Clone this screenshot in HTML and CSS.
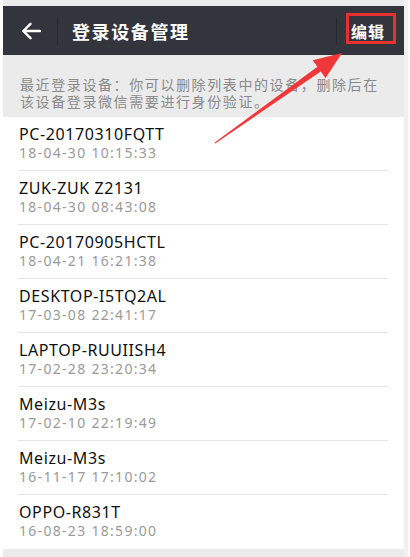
FILE: index.html
```html
<!DOCTYPE html>
<html lang="zh-CN">
<head>
<meta charset="utf-8">
<title>登录设备管理</title>
<link rel="stylesheet" href="styles.css">
</head>
<body>
<div class="screen">
  <header class="header">
    <div class="back">
      <svg width="20" height="18" viewBox="0 0 20 18"><path d="M19 9H2.5M9.5 1.8L2.3 9l7.2 7.2" fill="none" stroke="#fff" stroke-width="2.4" stroke-linecap="round" stroke-linejoin="round"/></svg>
    </div>
    <div class="divider"></div>
    <h1 class="title">登录设备管理</h1>
    <div class="divider right-divider"></div>
    <div class="edit">编辑</div>
  </header>
  <div class="info">最近登录设备：你可以删除列表中的设备，删除后在<br>该设备登录微信需要进行身份验证。</div>
  <ul class="list">
    <li class="row"><div class="name">PC-20170310FQTT</div><div class="date">18-04-30 10:15:33</div></li>
    <li class="row"><div class="name">ZUK-ZUK Z2131</div><div class="date">18-04-30 08:43:08</div></li>
    <li class="row"><div class="name">PC-20170905HCTL</div><div class="date">18-04-21 16:21:38</div></li>
    <li class="row"><div class="name">DESKTOP-I5TQ2AL</div><div class="date">17-03-08 22:41:17</div></li>
    <li class="row"><div class="name">LAPTOP-RUUIISH4</div><div class="date">17-02-28 23:20:34</div></li>
    <li class="row"><div class="name">Meizu-M3s</div><div class="date">17-02-10 22:19:49</div></li>
    <li class="row"><div class="name">Meizu-M3s</div><div class="date">16-11-17 17:10:02</div></li>
    <li class="row last"><div class="name">OPPO-R831T</div><div class="date">16-08-23 18:59:00</div></li>
  </ul>
  <div class="highlight"></div>
  <svg class="pointer" width="410" height="557" viewBox="0 0 410 557"><polygon points="215.3,143.4 320.8,71.6 325.5,78.2 342,53 312.7,60.2 317.4,66.8 214.7,142.6" fill="#f0383a"/></svg>
</div>
</body>
</html>
```
FILE: styles.css
```css
* { box-sizing: border-box; }
html, body { margin: 0; padding: 0; }
body {
  background: #fff;
  width: 410px;
  height: 557px;
  overflow: hidden;
  font-family: "Noto Sans CJK SC", sans-serif;
}
.screen {
  margin-left: 3px;
  padding-top: 6px;
  width: 405px;
  height: 557px;
  border-right: 4px solid #f0f0f0;
  background: #ebebeb;
}
.header {
  height: 49px;
  background: #33353c;
  display: flex;
  align-items: center;
}
.back {
  width: 54px;
  display: flex;
  justify-content: center;
  padding-left: 1px;
}
.back svg { display: block; }
.divider {
  width: 1px;
  height: 28px;
  background: #27292e;
}
.title {
  margin: 0 0 0 14px;
  flex: 1;
  color: #fff;
  font-size: 18px;
  font-weight: 700;
  letter-spacing: 1.6px;
  line-height: 20px;
}
.right-divider { margin-right: 14px; }
.edit {
  color: #fff;
  font-size: 16px;
  font-weight: 700;
  letter-spacing: 1px;
  width: 53px;
  line-height: 20px;
}
.info {
  height: 62px;
  padding: 21px 0 0 17px;
  font-size: 14px;
  line-height: 17px;
  letter-spacing: 1.6px;
  color: #8a8a8a;
  white-space: nowrap;
}
.list {
  list-style: none;
  margin: 0;
  padding: 0;
  background: #fff;
}
.row {
  height: 54px;
  margin: 0 16px 0 15px;
  padding: 8px 0 0 1px;
  border-bottom: 1px solid #e4e4e4;
}
.row.last { border-bottom-color: transparent; }
.name {
  font-family: "Noto Sans", sans-serif;
  font-size: 16px;
  line-height: 19px;
  letter-spacing: 0.6px;
  color: #111;
}
.date {
  font-family: "Noto Sans", sans-serif;
  font-size: 14px;
  line-height: 18px;
  letter-spacing: 1.3px;
  color: #9a9a9a;
}
.highlight {
  position: absolute;
  left: 346px;
  top: 13px;
  width: 50px;
  height: 31px;
  border: 3px solid #e8312f;
}
.pointer {
  position: absolute;
  left: 0;
  top: 0;
  pointer-events: none;
}
```
